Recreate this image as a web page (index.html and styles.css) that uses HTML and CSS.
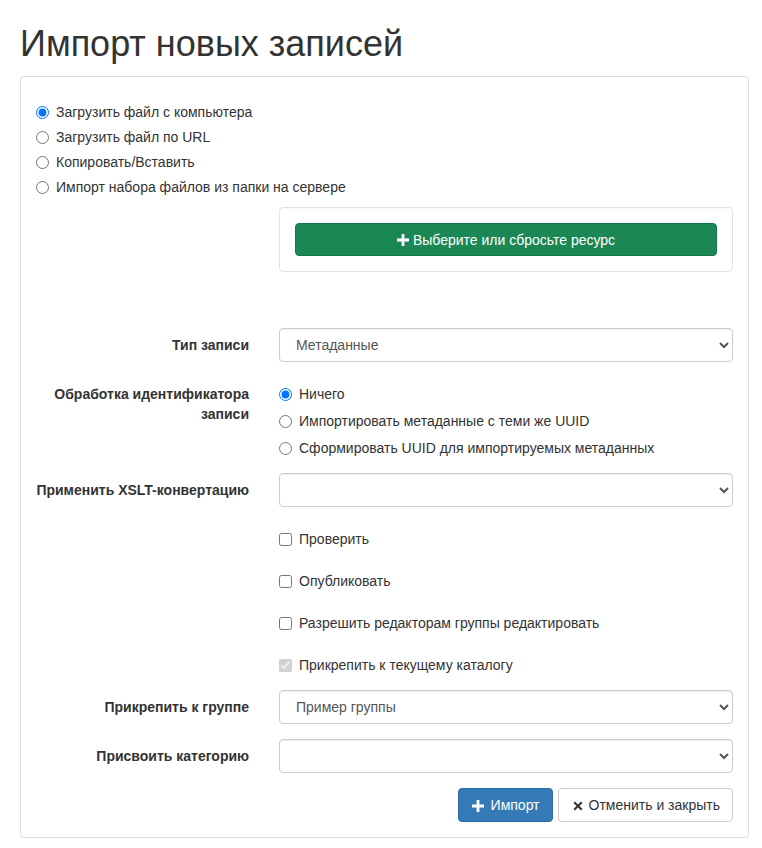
FILE: index.html
```html
<!DOCTYPE html>
<html lang="ru">
<head>
<meta charset="utf-8">
<title>Импорт новых записей</title>
<link rel="stylesheet" href="styles.css">
</head>
<body>
<div class="page">
  <h1 class="title">Импорт новых записей</h1>
  <div class="panel">
    <div class="sources">
      <label class="radio"><input type="radio" name="src" checked>Загрузить файл с компьютера</label>
      <label class="radio"><input type="radio" name="src">Загрузить файл по URL</label>
      <label class="radio"><input type="radio" name="src">Копировать/Вставить</label>
      <label class="radio"><input type="radio" name="src">Импорт набора файлов из папки на сервере</label>
    </div>
    <div class="form-row">
      <div></div>
      <div class="well">
        <button class="btn btn-green" type="button"><svg class="icon-plus" viewBox="0 0 12 12" width="12" height="12"><path d="M4.6 0h2.8v4.6H12v2.8H7.4V12H4.6V7.4H0V4.6h4.6z" fill="#fff"/></svg>Выберите или сбросьте ресурс</button>
      </div>
    </div>

    <div class="form-row group">
      <label class="ctl-label">Тип записи</label>
      <select class="form-control"><option>Метаданные</option></select>
    </div>

    <div class="form-row group">
      <label class="ctl-label">Обработка идентификатора записи</label>
      <div>
        <label class="radio-h"><input type="radio" name="uuid" checked>Ничего</label>
        <label class="radio-h"><input type="radio" name="uuid">Импортировать метаданные с теми же UUID</label>
        <label class="radio-h"><input type="radio" name="uuid">Сформировать UUID для импортируемых метаданных</label>
      </div>
    </div>

    <div class="form-row group">
      <label class="ctl-label">Применить XSLT-конвертацию</label>
      <select class="form-control"><option></option></select>
    </div>

    <div class="form-row group">
      <div></div>
      <label class="radio-h"><input type="checkbox">Проверить</label>
    </div>
    <div class="form-row group">
      <div></div>
      <label class="radio-h"><input type="checkbox">Опубликовать</label>
    </div>
    <div class="form-row group">
      <div></div>
      <label class="radio-h"><input type="checkbox">Разрешить редакторам группы редактировать</label>
    </div>
    <div class="form-row group">
      <div></div>
      <label class="radio-h disabled"><input type="checkbox" checked disabled>Прикрепить к текущему каталогу</label>
    </div>

    <div class="form-row group">
      <label class="ctl-label">Прикрепить к группе</label>
      <select class="form-control"><option>Пример группы</option></select>
    </div>

    <div class="form-row group">
      <label class="ctl-label">Присвоить категорию</label>
      <select class="form-control"><option></option></select>
    </div>

    <div class="actions">
      <button class="btn btn-primary" type="button"><span class="glyph glyph-plus"><svg viewBox="0 0 12 12" width="12" height="12"><path d="M4.6 0h2.8v4.6H12v2.8H7.4V12H4.6V7.4H0V4.6h4.6z" fill="#fff"/></svg></span>Импорт</button>
      <button class="btn btn-default" type="button"><span class="glyph"><svg viewBox="0 0 10 10" width="10" height="10"><path d="M1.2 1.2L8.8 8.8M8.8 1.2L1.2 8.8" stroke="#333" stroke-width="2.1"/></svg></span>Отменить и закрыть</button>
    </div>
  </div>
</div>
</body>
</html>
```

FILE: styles.css
```css
* { box-sizing: border-box; }
html, body { margin: 0; padding: 0; background: #fff; }
body {
  font-family: "Liberation Sans", Arial, sans-serif;
  font-size: 14px;
  line-height: 20px;
  color: #333;
}
.page { padding: 0 13px 0 20px; }
.title {
  font-size: 36px;
  font-weight: 500;
  line-height: 40px;
  margin: 24px 0 12px;
  color: #333;
}
.panel {
  border: 1px solid #ddd;
  border-radius: 4px;
  padding: 15px;
  box-shadow: 0 1px 1px rgba(0,0,0,0.05);
}
.sources { display: flex; flex-direction: column; gap: 5px; padding: 10px 0; }
.radio, .radio-h {
  display: flex;
  align-items: center;
  height: 20px;
  cursor: pointer;
  white-space: nowrap;
}
.radio input, .radio-h input { margin: 0 7px 0 0; width: 13px; height: 13px; flex: none; }
.radio-h { height: 27px; padding-top: 7px; align-items: flex-start; }
.radio-h input { margin-top: 4px; }
.form-row {
  display: grid;
  grid-template-columns: 213px 1fr;
  column-gap: 30px;
}
.group { margin-bottom: 15px; }
.well {
  border: 1px solid #e3e3e3;
  border-radius: 4px;
  padding: 15px;
  margin-bottom: 56px;
  box-shadow: inset 0 1px 1px rgba(0,0,0,0.03);
}
.ctl-label {
  text-align: right;
  font-weight: bold;
  padding-top: 7px;
}
.form-control {
  display: block;
  width: 100%;
  height: 34px;
  padding: 6px 8px 6px 12px;
  font-family: inherit;
  font-size: 14px;
  color: #555;
  background: #fff;
  border: 1px solid #ccc;
  border-radius: 4px;
  box-shadow: inset 0 1px 1px rgba(0,0,0,0.075);
}
.btn {
  display: inline-flex;
  align-items: center;
  justify-content: center;
  height: 34px;
  padding: 6px 12px;
  font-family: inherit;
  font-size: 14px;
  line-height: 20px;
  border: 1px solid transparent;
  border-radius: 4px;
  white-space: nowrap;
  cursor: pointer;
}
.btn-green {
  width: 100%;
  height: 33px;
  background: #1b8755;
  border-color: #17774b;
  color: #fff;
}
.icon-plus { flex: none; margin: 1px 4px 0 0; }
.btn-primary { background: #337ab7; border-color: #2e6da4; color: #fff; }
.btn-default { background: #fff; border-color: #ccc; color: #333; }
.glyph {
  display: inline-flex;
  align-items: center;
  justify-content: center;
  width: 14px;
  height: 14px;
  margin-right: 4px;
  margin-top: 1px;
  flex: none;
}
.glyph-plus { margin-right: 6px; }
.actions { display: flex; justify-content: flex-end; gap: 5px; }
.disabled { cursor: default; }
```
